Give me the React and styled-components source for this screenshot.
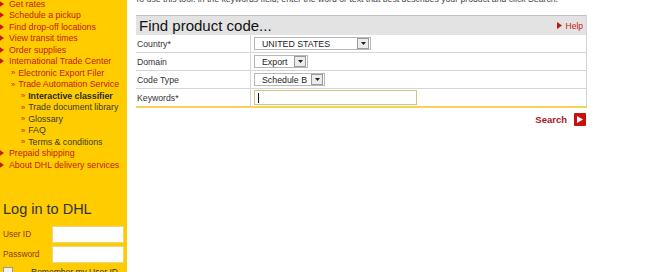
import React from 'react'
import styled, { createGlobalStyle } from 'styled-components'

const Global = createGlobalStyle`
  html, body { margin: 0; padding: 0; background: #fff; }
  body { font-family: "Liberation Sans", Arial, sans-serif; overflow: hidden; }
`

const menu = [
  { text: 'Get rates', level: 0 },
  { text: 'Schedule a pickup', level: 0 },
  { text: 'Find drop-off locations', level: 0 },
  { text: 'View transit times', level: 0 },
  { text: 'Order supplies', level: 0 },
  { text: 'International Trade Center', level: 0 },
  { text: 'Electronic Export Filer', level: 1 },
  { text: 'Trade Automation Service', level: 1 },
  { text: 'Interactive classifier', level: 2, active: true },
  { text: 'Trade document library', level: 2 },
  { text: 'Glossary', level: 2 },
  { text: 'FAQ', level: 2 },
  { text: 'Terms & conditions', level: 2 },
  { text: 'Prepaid shipping', level: 0 },
  { text: 'About DHL delivery services', level: 0 },
]

function Arrow() {
  return (
    <svg width="8" height="10" viewBox="0 0 8 10">
      <path d="M0.5 0.5 L7 5 L0.5 9.5 Z" fill="#c8150c" />
    </svg>
  )
}

function DropButton() {
  return (
    <DropBtn>
      <svg width="7" height="5" viewBox="0 0 7 5">
        <path d="M1 1 L6 1 L3.5 4 Z" fill="#222" />
      </svg>
    </DropBtn>
  )
}

function App() {
  return (
    <Page>
      <Global />
      <Sidebar>
        <Menu>
          {menu.map((m) => (
            <Item key={m.text} level={m.level} active={m.active}>
              {m.level === 0 ? (
                <Bullet><Arrow /></Bullet>
              ) : (
                <Raquo>»</Raquo>
              )}
              <span>{m.text}</span>
            </Item>
          ))}
        </Menu>
        <Rule />
        <Login>
          <LoginTitle>Log in to DHL</LoginTitle>
          <Field>
            <FieldLabel>User ID</FieldLabel>
            <TextBox />
          </Field>
          <Field>
            <FieldLabel>Password</FieldLabel>
            <TextBox />
          </Field>
          <Remember>
            <Check />
            <span>Remember my User ID</span>
          </Remember>
        </Login>
      </Sidebar>
      <Main>
        <Intro>
          To use this tool: in the keywords field, enter the word or text that best describes your product and click Search.
        </Intro>
        <Box>
          <BoxHead>
            <BoxTitle>Find product code...</BoxTitle>
            <Help>
              <svg width="5" height="7" viewBox="0 0 5 7">
                <path d="M0 0 L5 3.5 L0 7 Z" fill="#c8150c" />
              </svg>
              Help
            </Help>
          </BoxHead>
          <Row>
            <Label>Country*</Label>
            <Cell>
              <Select width={117}>
                <span>UNITED STATES</span>
                <DropButton />
              </Select>
            </Cell>
          </Row>
          <Row>
            <Label>Domain</Label>
            <Cell>
              <Select width={54}>
                <span>Export</span>
                <DropButton />
              </Select>
            </Cell>
          </Row>
          <Row>
            <Label>Code Type</Label>
            <Cell>
              <Select width={71}>
                <span>Schedule B</span>
                <DropButton />
              </Select>
            </Cell>
          </Row>
          <Row last>
            <Label>Keywords*</Label>
            <Cell>
              <Keywords>
                <Caret />
              </Keywords>
            </Cell>
          </Row>
        </Box>
        <Actions>
          <SearchText>Search</SearchText>
          <SearchIcon>
            <svg width="6" height="7" viewBox="0 0 6 7">
              <path d="M0 0 L6 3.5 L0 7 Z" fill="#fff" />
            </svg>
          </SearchIcon>
        </Actions>
      </Main>
    </Page>
  )
}

const Page = styled.div`
  display: flex;
  width: 669px;
  height: 272px;
  overflow: hidden;
`

const Sidebar = styled.div`
  width: 127px;
  flex: none;
  background: #ffcc00;
  display: flex;
  flex-direction: column;
  overflow: hidden;
`

const Menu = styled.div`
  margin-top: -2px;
  display: flex;
  flex-direction: column;
`

const Item = styled.div`
  display: flex;
  align-items: center;
  height: 11.5px;
  font-size: 8.8px;
  white-space: nowrap;
  padding-left: ${(p) => (p.level === 0 ? 0 : p.level === 1 ? 11 : 21)}px;
  color: ${(p) => (p.active ? '#2a2a2a' : p.level === 2 ? '#3a3a2a' : '#c0200c')};
  font-weight: ${(p) => (p.active ? 'bold' : 'normal')};
`

const Bullet = styled.span`
  display: flex;
  margin-left: -3px;
  width: 12px;
`

const Raquo = styled.span`
  color: #c0200c;
  font-size: 7.5px;
  font-weight: normal;
  margin-right: 3px;
`

const Rule = styled.div`
  margin: 22px 4px 0 4px;
  height: 2px;
  background: #ffe680;
`

const Login = styled.div`
  padding: 8px 3px 0 3px;
  display: flex;
  flex-direction: column;
`

const LoginTitle = styled.div`
  font-size: 14.5px;
  color: #333;
  margin-bottom: 9px;
`

const Field = styled.div`
  display: flex;
  align-items: center;
  justify-content: space-between;
  margin-bottom: 3px;
`

const FieldLabel = styled.span`
  font-size: 8.3px;
  color: #8a3c10;
`

const TextBox = styled.div`
  width: 70px;
  height: 15px;
  background: #fff;
  border: 1px solid #e8d680;
`

const Remember = styled.div`
  display: flex;
  align-items: center;
  gap: 18px;
  font-size: 8.5px;
  color: #333;
  margin-top: 1px;
  white-space: nowrap;
`

const Check = styled.div`
  width: 8px;
  height: 8px;
  flex: none;
  background: #f2f2f2;
  border: 1px solid #999;
`

const Main = styled.div`
  padding-left: 8px;
  display: flex;
  flex-direction: column;
`

const Intro = styled.div`
  margin-top: -6px;
  font-size: 8.7px;
  color: #444;
  white-space: nowrap;
  height: 11px;
`

const Box = styled.div`
  margin-top: 10px;
  margin-left: 1px;
  width: 450px;
  border-right: 1px solid #d4d4d4;
  border-bottom: 2px solid #f7d35a;
`

const BoxHead = styled.div`
  display: flex;
  align-items: center;
  justify-content: space-between;
  height: 19px;
  background: #e3e3e3;
  border-top: 1px solid #bfbfbf;
  padding: 0 3px 0 3px;
`

const BoxTitle = styled.span`
  font-size: 15px;
  color: #111;
`

const Help = styled.span`
  display: flex;
  align-items: center;
  gap: 4px;
  font-size: 8.5px;
  color: #c8150c;
`

const Row = styled.div`
  display: flex;
  height: 17px;
  border-bottom: ${(p) => (p.last ? 'none' : '1px solid #d6d6d6')};
`

const Label = styled.div`
  width: 113px;
  border-right: 1px solid #d6d6d6;
  display: flex;
  align-items: center;
  padding-left: 1px;
  font-size: 8.7px;
  color: #333;
`

const Cell = styled.div`
  flex: 1;
  display: flex;
  align-items: center;
  padding-left: 3px;
`

const Select = styled.div`
  width: ${(p) => p.width}px;
  height: 13px;
  box-sizing: border-box;
  border: 1px solid #b8b8b8;
  background: #fff;
  display: flex;
  align-items: center;
  justify-content: space-between;
  gap: 4px;
  padding: 0 1px 0 7px;
  font-size: 8.8px;
  color: #222;
  white-space: nowrap;
`

const DropBtn = styled.span`
  width: 10px;
  height: 9px;
  flex: none;
  border: 1px solid #9a9a9a;
  background: #ececec;
  display: flex;
  align-items: center;
  justify-content: center;
`

const Keywords = styled.div`
  width: 163px;
  height: 15px;
  box-sizing: border-box;
  border: 1px solid #d6c27a;
  background: #fff;
  display: flex;
  align-items: center;
  padding-left: 3px;
`

const Caret = styled.span`
  width: 1px;
  height: 10px;
  background: #111;
`

const Actions = styled.div`
  width: 451px;
  display: flex;
  justify-content: flex-end;
  align-items: center;
  gap: 7px;
  margin-top: 5px;
`

const SearchText = styled.span`
  font-size: 9.5px;
  font-weight: bold;
  color: #a8141c;
`

const SearchIcon = styled.span`
  width: 12px;
  height: 13px;
  background: #c8100e;
  border-radius: 1px;
  display: flex;
  align-items: center;
  justify-content: center;
`

export default App
